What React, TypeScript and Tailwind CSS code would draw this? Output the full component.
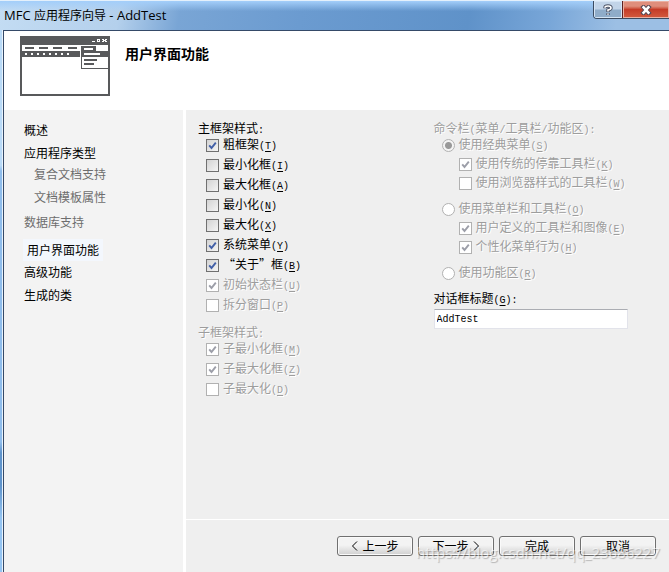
import { useState } from "react";
import type { ReactNode } from "react";

type Option = {
  id: string;
  label: string;
  accessKey: string;
  checked?: boolean;
  disabled?: boolean;
};

const navGroups = [
  { items: ["概述", "应用程序类型"], className: "text-black" },
  { items: ["复合文档支持", "文档模板属性"], className: "mt-px pl-[10px] text-[#6d6d6d]" },
  { items: ["数据库支持"], className: "mt-[5px] text-[#6d6d6d]" },
  { items: ["用户界面功能"], className: "mt-[7px] text-black", active: true },
  { items: ["高级功能", "生成的类"], className: "mt-px text-black" },
];

const mainFrameOptions: Option[] = [
  { id: "thick-frame", label: "粗框架", accessKey: "T", checked: true },
  { id: "minimize-box", label: "最小化框", accessKey: "I" },
  { id: "maximize-box", label: "最大化框", accessKey: "A" },
  { id: "minimized", label: "最小化", accessKey: "N" },
  { id: "maximized", label: "最大化", accessKey: "X" },
  { id: "system-menu", label: "系统菜单", accessKey: "Y", checked: true },
  { id: "about-box", label: "“关于”框", accessKey: "B", checked: true },
  { id: "status-bar", label: "初始状态栏", accessKey: "U", checked: true, disabled: true },
  { id: "split-window", label: "拆分窗口", accessKey: "P", disabled: true },
];

const childFrameOptions: Option[] = [
  { id: "child-minimize-box", label: "子最小化框", accessKey: "M", checked: true, disabled: true },
  { id: "child-maximize-box", label: "子最大化框", accessKey: "Z", checked: true, disabled: true },
  { id: "child-maximized", label: "子最大化", accessKey: "D", disabled: true },
];

const classicMenuOptions: Option[] = [
  { id: "docking-toolbar", label: "使用传统的停靠工具栏", accessKey: "K", checked: true, disabled: true },
  { id: "browser-toolbar", label: "使用浏览器样式的工具栏", accessKey: "W", disabled: true },
];

const menuBarOptions: Option[] = [
  { id: "user-toolbar", label: "用户定义的工具栏和图像", accessKey: "E", checked: true, disabled: true },
  { id: "personal-menu", label: "个性化菜单行为", accessKey: "H", checked: true, disabled: true },
];

const disabledText = "text-[#9d9d9d] [text-shadow:1px_1px_0_#ffffff]";

const Half = ({ children }: { children: ReactNode }) => (
  <span className="font-['Liberation_Mono',monospace] text-[10px]">{children}</span>
);

const AccessKey = ({ letter }: { letter: string }) => (
  <Half>
    (<span className="underline underline-offset-2">{letter}</span>)
  </Half>
);

const CheckOption = ({ option }: { option: Option }) => {
  const [checked, setChecked] = useState(!!option.checked);

  return (
    <div className="flex h-full items-center gap-1">
      <span className="grid h-[13px] w-[13px] shrink-0">
        <input
          id={option.id}
          type="checkbox"
          checked={checked}
          disabled={option.disabled}
          onChange={(e) => setChecked(e.target.checked)}
          className="col-start-1 row-start-1 h-[13px] w-[13px] appearance-none border border-[#707070] bg-linear-to-br from-[#d3d3d3] to-[#f5f5f5] disabled:border-[#b1b1b1] disabled:from-white disabled:to-white"
        />
        {checked && (
          <svg
            viewBox="0 0 13 13"
            className={`pointer-events-none col-start-1 row-start-1 h-[13px] w-[13px] ${
              option.disabled ? "text-[#9c9ea8]" : "text-[#4260a8]"
            }`}
          >
            <path d="M3.2 6.4 L5.5 9 L9.8 3.6" fill="none" stroke="currentColor" strokeWidth="1.9" />
          </svg>
        )}
      </span>
      <label htmlFor={option.id} className={`whitespace-nowrap ${option.disabled ? disabledText : ""}`}>
        {option.label}
        <AccessKey letter={option.accessKey} />
      </label>
    </div>
  );
};

const RadioOption = ({ option }: { option: Option }) => (
  <div className="flex h-5 items-center gap-1 pl-2">
    <input
      id={option.id}
      type="radio"
      name="command-bar"
      disabled
      defaultChecked={option.checked}
      className="h-[13px] w-[13px] shrink-0 appearance-none rounded-full border border-[#b1b1b1] bg-white checked:bg-[radial-gradient(circle,#999999_0_3px,#f4f4f4_4px)]"
    />
    <label htmlFor={option.id} className={`whitespace-nowrap ${disabledText}`}>
      {option.label}
      <AccessKey letter={option.accessKey} />
    </label>
  </div>
);

const FrameOptions = ({ options }: { options: Option[] }) => (
  <div className="pl-2">
    {options.map((option) => (
      <div key={option.id} className="h-5">
        <CheckOption option={option} />
      </div>
    ))}
  </div>
);

const ToolbarOptions = ({ options }: { options: Option[] }) => (
  <div className="pl-[25px]">
    {options.map((option) => (
      <div key={option.id} className="h-[19px]">
        <CheckOption option={option} />
      </div>
    ))}
  </div>
);

const WizardButton = ({ children }: { children: ReactNode }) => (
  <button
    type="button"
    className="flex h-5 w-[76px] items-center justify-center gap-1 rounded-[3px] border border-[#707070] bg-linear-to-b from-[#f3f3f3] from-45% to-[#d0d0d0] leading-4 shadow-[inset_0_0_0_1px_#fafafa]"
  >
    {children}
  </button>
);

const Chevron = ({ d }: { d: string }) => (
  <svg viewBox="0 0 7 10" className="h-[10px] w-[7px]">
    <path d={d} fill="none" stroke="#000" />
  </svg>
);

const WizardLogo = () => (
  <svg viewBox="0 0 90 60" className="h-[60px] w-[90px] shrink-0" shapeRendering="crispEdges">
    <path d="M0 0h90v60H0z" fill="#58595b" />
    <path d="M2 9h86v6H2zM2 21h86v37H2z" fill="#fff" />
    <path d="M5 11h9v2H5zM19 11h9v2h-9zM33 11h9v2h-9zM48 11h9v2h-9z" fill="#58595b" />
    <path
      d="M5 17h2v2H5zM11 17h2v2h-2zM17 17h2v2h-2zM23 17h2v2h-2zM29 17h2v2h-2zM35 17h2v2h-2zM41 17h2v2h-2zM47 17h2v2h-2z"
      fill="#fff"
    />
    <path d="M60 10h1v23h-1z" fill="#fff" />
    <path d="M61 10h15v5h14v18H61z" fill="#58595b" />
    <path d="M62 21h26v11H62zM64 12h9v2h-9zM64 17h16v2H64z" fill="#fff" />
    <path d="M64 23h13v2H64zM64 27h10v2H64z" fill="#58595b" />
    <path
      d="M72 5h3v1h-3zM77 3h3v3h-3zM82 3h2v1h-2zM85 3h2v1h-2zM83 4h3v1h-3zM82 5h2v1h-2zM85 5h2v1h-2z"
      fill="#fff"
    />
    <path d="M78 4h1v1h-1z" fill="#58595b" />
  </svg>
);

const TitleBar = () => (
  <header className="flex h-[30px] items-start justify-between border-t border-[#e4f0fb] bg-[linear-gradient(180deg,#a3cefa_0%,#a3cefa00_35%),linear-gradient(100deg,#c3dcf3_0%,#b4d0ec_18%,#79a5d5_27%,#6b9bd0_45%,#5f92c9_70%,#78a6d8_82%,#9cbfe4_92%,#9cbfe4_100%)]">
    <h1 className="pt-[5px] pl-1 font-['Open_Sans','Noto_Sans_CJK_SC',sans-serif] text-[13px] leading-[18px]">
      MFC <span className="text-[12px]">应用程序向导</span> - AddTest
    </h1>
    <div className="flex h-[18px] overflow-hidden rounded-bl-[4px] border-b border-l border-[#3b4b60]">
      <button
        type="button"
        aria-label="帮助"
        className="flex w-7 items-center justify-center bg-linear-to-b from-[#c2d4e8] from-45% to-[#8facc9] to-55% shadow-[inset_0_0_0_1px_#d5e4f4]"
      >
        <svg viewBox="0 0 10 12" className="h-3 w-[10px]">
          <path d="M2 4.2V3.5Q2 2 5 2T8 4Q8 5.3 5 6V8M5 9.2V11" fill="none" stroke="#4b5265" strokeWidth="3.4" />
          <path d="M2 3.7V3.5Q2 2 5 2T8 4Q8 5.3 5 6V7.6M5 9.4V10.8" fill="none" stroke="#fff" strokeWidth="1.6" />
        </svg>
      </button>
      <button
        type="button"
        aria-label="关闭"
        className="flex w-[47px] items-center justify-center border-l border-[#5d2020] bg-linear-to-b from-[#df8e7c] from-30% via-[#c53c28] via-50% to-[#d35a3e] shadow-[inset_0_0_0_1px_#eab0a2]"
      >
        <svg viewBox="0 0 12 10" className="h-[10px] w-3">
          <path d="M2 .5L10 9.5M10 .5L2 9.5" fill="none" stroke="#554854" strokeWidth="4.4" />
          <path d="M2.7 1.3L9.3 8.7M9.3 1.3L2.7 8.7" fill="none" stroke="#fff" strokeWidth="2.5" />
        </svg>
      </button>
    </div>
  </header>
);

const App = () => {
  const [title, setTitle] = useState("AddTest");

  return (
    <div
      lang="zh-CN"
      className="flex min-h-screen flex-col overflow-hidden bg-white font-['Noto_Sans_CJK_SC',sans-serif] text-[12px] leading-[14px] text-black"
    >
      <TitleBar />

      <div className="flex flex-1">
        <div className="w-[3px] shrink-0 border-r border-[#e8f3fd] bg-[linear-gradient(180deg,#b9daf7_0_25%,#8fbdec_26%_76%,#5f94cc_78%_84%,#94c4f2_90%)]" />

        <div className="flex min-w-0 flex-1 flex-col border-t border-l border-[#354a68]">
          <div className="flex h-[79px] items-start gap-[15px] pt-[5px] pl-4">
            <WizardLogo />
            <h2 className="pt-2 text-[14px] leading-[18px] font-bold">用户界面功能</h2>
          </div>

          <div className="flex flex-1">
            <nav className="flex w-[179px] shrink-0 flex-col bg-[#f3f3f3] pt-[10px] pl-5">
              {navGroups.map((group) => (
                <div key={group.items[0]} className={`flex flex-col items-start gap-[3px] ${group.className}`}>
                  {group.items.map((item) => (
                    <a
                      key={item}
                      href="#"
                      aria-current={group.active ? "page" : undefined}
                      className={group.active ? "-ml-px bg-[#f3f7fd] px-1 leading-[22px]" : "leading-5"}
                    >
                      {item}
                    </a>
                  ))}
                </div>
              ))}
            </nav>

            <main className="ml-[3px] flex min-w-0 flex-1 flex-col bg-[#efefef]">
              <div className="grid flex-1 grid-cols-2 content-start pt-[11px] pl-3">
                <div>
                  <fieldset>
                    <legend className="h-[14px]">
                      主框架样式<Half>:</Half>
                    </legend>
                    <FrameOptions options={mainFrameOptions} />
                  </fieldset>
                  <fieldset className="mt-[10px]" disabled>
                    <legend className={`h-[14px] ${disabledText}`}>
                      子框架样式<Half>:</Half>
                    </legend>
                    <FrameOptions options={childFrameOptions} />
                  </fieldset>
                </div>

                <div>
                  <fieldset disabled>
                    <legend className={`h-[14px] whitespace-nowrap ${disabledText}`}>
                      命令栏<Half>(</Half>菜单<Half>/</Half>工具栏<Half>/</Half>功能区<Half>):</Half>
                    </legend>
                    <div className="flex flex-col gap-[6px]">
                      <div>
                        <RadioOption option={{ id: "classic-menu", label: "使用经典菜单", accessKey: "S", checked: true }} />
                        <ToolbarOptions options={classicMenuOptions} />
                      </div>
                      <div>
                        <RadioOption option={{ id: "menu-bar", label: "使用菜单栏和工具栏", accessKey: "O" }} />
                        <ToolbarOptions options={menuBarOptions} />
                      </div>
                      <RadioOption option={{ id: "ribbon", label: "使用功能区", accessKey: "R" }} />
                    </div>
                  </fieldset>

                  <label htmlFor="dialog-title" className="mt-2 block h-[14px]">
                    对话框标题
                    <AccessKey letter="G" />
                    <Half>:</Half>
                  </label>
                  <input
                    id="dialog-title"
                    value={title}
                    onChange={(e) => setTitle(e.target.value)}
                    className="mt-1 block h-5 w-[194px] border border-[#e2e3ea] border-t-[#abadb3] bg-white px-[2px] font-['Liberation_Mono',monospace] text-[10px] leading-4"
                  />
                </div>
              </div>

              <footer className="relative flex h-[53px] items-start justify-end gap-[5px] border-t border-white pt-4 pr-[13px]">
                <WizardButton>
                  <Chevron d="M6 0.5L1.5 5L6 9.5" />
                  上一步
                </WizardButton>
                <WizardButton>
                  下一步
                  <Chevron d="M1 0.5L5.5 5L1 9.5" />
                </WizardButton>
                <WizardButton>完成</WizardButton>
                <WizardButton>取消</WizardButton>
                <span className="pointer-events-none absolute right-[9px] bottom-[10px] font-['Open_Sans',sans-serif] text-[15px] leading-5 text-white/60 [text-shadow:1px_1px_1px_#00000040]">
                  https://blog.csdn.net/qq_23686227
                </span>
              </footer>
            </main>
          </div>
        </div>
      </div>
    </div>
  );
};

export default App;
